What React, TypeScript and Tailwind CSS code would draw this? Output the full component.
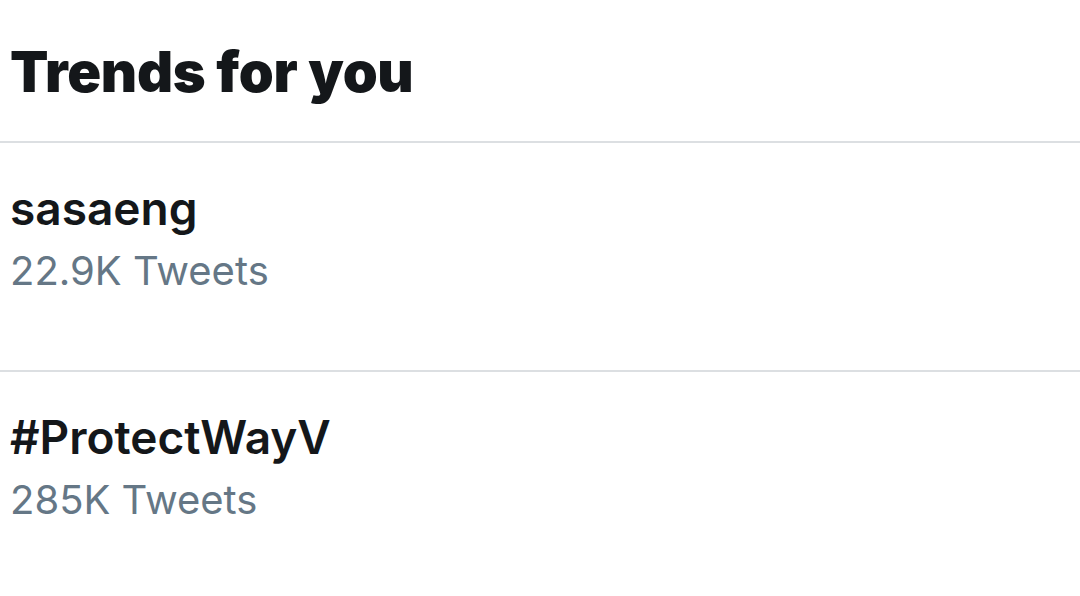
const trends = [
  { name: 'sasaeng', count: '22.9K Tweets' },
  { name: '#ProtectWayV', count: '285K Tweets' },
]

function TrendRow({ name, count }: { name: string; count: string }) {
  return (
    <div className="h-[229px] border-b-2 border-[#dcdfe2] pl-[10px] pt-[39px]">
      <div className="text-[46px] font-semibold leading-[52px] text-[#14171a]">{name}</div>
      <div className="mt-[11px] text-[40px] font-normal leading-[52px] text-[#657786]">{count}</div>
    </div>
  )
}

export default function App() {
  return (
    <div className="h-[596px] w-[1080px] overflow-hidden bg-white font-['Inter',sans-serif]">
      <div className="h-[143px] border-b-2 border-[#dcdfe2] pl-[10px] pt-[42px]">
        <h1 className="text-[56px] font-black leading-[60px] tracking-[-0.3px] text-[#14171a]">Trends for you</h1>
      </div>
      {trends.map((t) => (
        <TrendRow key={t.name} name={t.name} count={t.count} />
      ))}
    </div>
  )
}
